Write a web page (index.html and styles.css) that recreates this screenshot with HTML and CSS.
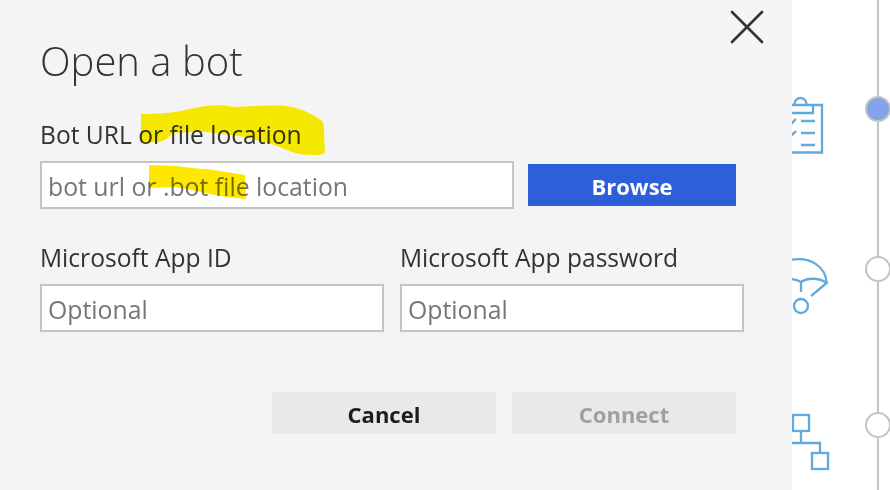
FILE: index.html
```html
<!DOCTYPE html>
<html lang="en">
<head>
<meta charset="utf-8">
<title>Open a bot</title>
<link rel="stylesheet" href="styles.css">
</head>
<body>
<div class="page">
  <main class="dialog">
    <div class="head">
      <h1 class="title">Open a bot</h1>
      <button class="close" aria-label="Close">
        <svg width="34" height="34" viewBox="0 0 34 34"><path d="M2 2L32 32M32 2L2 32" fill="none" stroke="#333" stroke-width="2.600" stroke-linecap="round"/></svg>
      </button>
    </div>
    <label class="label label-first">Bot URL or file location</label>
    <div class="row-url">
      <input class="field field-url" placeholder="bot url or .bot file location">
      <button class="browse">Browse</button>
    </div>
    <div class="row-ids">
      <div class="col">
        <label class="label">Microsoft App ID</label>
        <input class="field" placeholder="Optional">
      </div>
      <div class="col">
        <label class="label">Microsoft App password</label>
        <input class="field" placeholder="Optional">
      </div>
    </div>
    <div class="actions">
      <button class="btn btn-cancel">Cancel</button>
      <button class="btn btn-connect">Connect</button>
    </div>
  </main>
  <aside class="rail">
    <div class="step step-one">
      <svg class="icon" viewBox="792 59 40 100"><g fill="none" stroke="#5fabe0" stroke-width="2.300">
        <path d="M790 105H822V152.500H790"/>
        <path d="M790 113H813V105"/>
        <path d="M794.500 105V104A6 6 0 0 1 806.500 104V105"/>
        <path d="M801 121H815M801 133H815M801 145H815"/>
        <path d="M791 124L796 119M791 136L796 131"/>
      </g></svg>
      <span class="dot dot-active"></span>
    </div>
    <div class="step step-two">
      <svg class="icon" viewBox="792 219 40 100"><g fill="none" stroke="#5fabe0" stroke-width="2.300">
        <path d="M790 260C812 256 826 268 826.700 283"/>
        <path d="M790 279C795 279 798 280 801 282C807 278 818 277 826.700 283L811 296"/>
        <path d="M801 282V292"/>
        <circle cx="801" cy="306" r="7"/>
      </g></svg>
      <span class="dot"></span>
    </div>
    <div class="step step-three">
      <svg class="icon" viewBox="792 375 40 100"><g fill="none" stroke="#5fabe0" stroke-width="2.300">
        <rect x="793" y="415" width="16" height="16"/>
        <rect x="812" y="453" width="16" height="16"/>
        <path d="M801 432V443M790 443H820V452"/>
      </g></svg>
      <span class="dot"></span>
    </div>
  </aside>
  <svg class="marker" viewBox="0 0 890 490" aria-hidden="true">
    <path fill="#fff200" d="M141 114C160 114 175 113 190 109C205 105 222 104 233 107C255 106 275 105 287 106C300 108 315 115 322 121C325 124 324 140 325 151C325 155 320 155 312 155C300 155 290 152 280 147C260 139 235 135 207 132C195 132 185 132 173 133C168 138 163 142 158 142L141 143Z"/>
    <path fill="#ffe800" d="M149 165L177 166C190 168 200 169 207 169L245 175L246 199C235 198 225 197 215 195C200 192 185 188 173 187L149 188Z"/>
  </svg>
</div>
</body>
</html>
```
FILE: styles.css
```css
* { box-sizing: border-box; }
html, body { margin: 0; height: 100%; }
body { background: #fff; font-family: "Open Sans", "Liberation Sans", sans-serif; overflow: hidden; }
.page { position: relative; display: flex; width: 890px; height: 490px; overflow: hidden; }

.dialog { width: 792px; height: 490px; background: #f4f4f4; padding: 0 48px 0 40px; flex: none; }
.head { display: flex; justify-content: space-between; height: 121px; }
.title { margin: 37px 0 0 0; font-size: 40px; font-weight: 300; line-height: 48px; color: #333; }
.close { margin: 10px -20px 0 0; padding: 0; width: 34px; height: 34px; border: 0; background: none; }

.label { display: block; height: 27px; font-size: 24.600px; line-height: 27px; color: #333; white-space: nowrap; }
.row-url { display: flex; align-items: center; margin-top: 13px; gap: 14px; }
.field { display: block; height: 48px; width: 100%; border: 2px solid #c4c4c4; background: #fff; padding: 2px 6px 0; font: 24.800px "Open Sans", "Liberation Sans", sans-serif; color: #333; outline: 0; }
.field::placeholder { color: #767676; opacity: 1; }
.field-url { width: 474px; flex: none; }
.browse { width: 208px; height: 42px; border: 0; background: #2d60d8; color: #fff; font: 700 22px "Open Sans", "Liberation Sans", sans-serif; padding: 2px 0 0; }

.row-ids { display: grid; grid-template-columns: 344px 344px; column-gap: 16px; margin-top: 35px; }
.col .label { margin-bottom: 13px; }

.actions { display: flex; justify-content: flex-end; gap: 16px; margin-top: 60px; padding-right: 8px; }
.btn { width: 224px; height: 42px; border: 0; background: #e9e9e9; font: 700 22px "Open Sans", "Liberation Sans", sans-serif; padding: 2px 0 0; }
.btn-cancel { color: #1c1c1c; }
.btn-connect { color: #a0a0a0; }

.rail { position: relative; flex: 1; display: flex; flex-direction: column; }
.rail::before { content: ""; position: absolute; left: 85px; top: 0; bottom: 0; width: 2px; background: #c4c4c4; }
.step { position: relative; display: flex; align-items: center; justify-content: space-between; height: 26px; }
.step-one { margin-top: 96px; }
.step-two { margin-top: 134px; }
.step-three { margin-top: 130px; }
.icon { width: 40px; height: 100px; flex: none; }
.dot { width: 26px; height: 26px; margin-right: -1px; border-radius: 50%; border: 2px solid #c4c4c4; background: #fff; flex: none; }
.dot-active { background: #84a3ea; }

.marker { position: absolute; left: 0; top: 0; width: 890px; height: 490px; mix-blend-mode: multiply; pointer-events: none; }
```
